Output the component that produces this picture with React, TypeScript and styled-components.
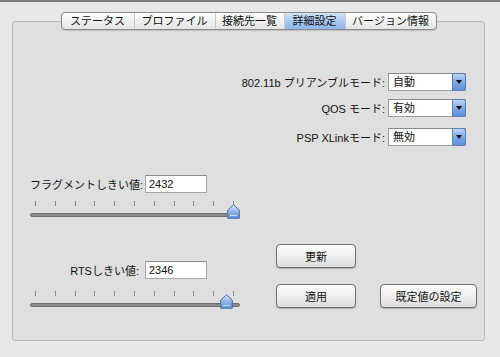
import React from 'react'
import styled, { createGlobalStyle } from 'styled-components'

const GlobalStyle = createGlobalStyle`
  html, body {
    margin: 0;
    padding: 0;
    background: #e8e8e8;
  }
  * {
    box-sizing: border-box;
  }
`

const Screen = styled.div`
  width: 500px;
  height: 357px;
  overflow: hidden;
  background: #e8e8e8;
  border-top: 2px solid #7b7b7b;
  padding: 10px 0 0 12px;
  font-family: 'Liberation Sans', 'Noto Sans CJK JP', sans-serif;
  font-size: 11px;
  color: #111;
`
const TabRow = styled.div`
  width: 473px;
  display: flex;
  justify-content: center;
  position: relative;
  z-index: 1;
`
const TabBar = styled.div`
  display: flex;
  height: 18px;
  border: 1px solid #8a8a8a;
  border-radius: 4px;
  overflow: hidden;
  background: linear-gradient(#ffffff, #f1f1f1 50%, #e4e4e4);
  box-shadow: 0 1px 1px rgba(0, 0, 0, 0.15);
`
const Tab = styled.div<{ $w: number; $active?: boolean }>`
  width: ${(p) => p.$w}px;
  display: flex;
  align-items: center;
  justify-content: center;
  line-height: 16px;
  border-left: 1px solid #c9c9c9;
  background: ${(p) =>
    p.$active
      ? 'linear-gradient(#d4e4f8, #a8c8f0 50%, #8db6ec)'
      : 'transparent'};
  &:first-child {
    border-left: none;
  }
`
const Panel = styled.div`
  width: 473px;
  height: 320px;
  margin-top: -9px;
  border: 1px solid #b8b8b8;
  border-radius: 3px;
  background: #dfdfdf;
  padding: 51px 18px 0 17px;
`
const SelectStack = styled.div`
  display: flex;
  flex-direction: column;
  align-items: flex-end;
`
const SelectRow = styled.div<{ $mt: number }>`
  display: flex;
  align-items: center;
  gap: 3px;
  margin-top: ${(p) => p.$mt}px;
`
const Label = styled.span`
  white-space: nowrap;
`
const SelectBox = styled.div`
  width: 78px;
  height: 18px;
  display: flex;
  background: #fff;
  border: 1px solid #9c9c9c;
  border-top-color: #8a8a8a;
`
const SelectValue = styled.span`
  flex: 1;
  padding-left: 4px;
  line-height: 16px;
`
const SelectArrow = styled.div`
  width: 14px;
  height: 18px;
  margin: -1px -1px 0 0;
  border: 1px solid #5a7fb5;
  border-radius: 0 3px 3px 0;
  background: linear-gradient(#bcd5f4, #7ea9e6 50%, #5d90dc);
  display: flex;
  align-items: center;
  justify-content: center;
  &::after {
    content: '';
    border-left: 3px solid transparent;
    border-right: 3px solid transparent;
    border-top: 4px solid #111;
  }
`
const Lower = styled.div`
  display: flex;
  margin-top: 29px;
`
const SliderColumn = styled.div`
  flex: none;
  width: 210px;
  display: flex;
  flex-direction: column;
`
const InputRow = styled.div<{ $mt: number }>`
  display: grid;
  grid-template-columns: 109px 62px;
  gap: 6px;
  align-items: center;
  height: 18px;
  margin-top: ${(p) => p.$mt}px;
`
const RightLabel = styled.span`
  text-align: right;
  white-space: nowrap;
`
const NumberField = styled.div`
  height: 18px;
  background: #fff;
  border: 1px solid #a8a8a8;
  border-top-color: #8e8e8e;
  padding-left: 3px;
  line-height: 16px;
`
const SliderBox = styled.div<{ $mt: number }>`
  position: relative;
  height: 20px;
  margin-top: ${(p) => p.$mt}px;
`
const Ticks = styled.div`
  display: flex;
  justify-content: space-between;
  padding: 2px 6px 0 5px;
`
const Tick = styled.span`
  width: 1px;
  height: 5px;
  background: #8a8a8a;
`
const Track = styled.div`
  margin-top: 7px;
  height: 4px;
  border-radius: 2px;
  background: #8c8c8c;
  border: 1px solid #6f6f6f;
`
const Thumb = styled.svg`
  position: absolute;
  top: 5px;
`
const ButtonArea = styled.div`
  flex: none;
  margin-left: 36px;
  padding-top: 69px;
  display: grid;
  grid-template-columns: 80px 97px;
  column-gap: 24px;
  row-gap: 16px;
  align-content: start;
`
const Button = styled.div`
  height: 24px;
  border: 1px solid #6e6e6e;
  border-radius: 4px;
  background: linear-gradient(#fdfdfd, #eeeeee 50%, #dcdcdc);
  box-shadow: 0 1px 1px rgba(0, 0, 0, 0.2);
  display: flex;
  align-items: center;
  justify-content: center;
`

const tabs = [
  { label: 'ステータス', w: 72 },
  { label: 'プロファイル', w: 81 },
  { label: '接続先一覧', w: 69 },
  { label: '詳細設定', w: 61, active: true },
  { label: 'バージョン情報', w: 91 }
]

const selects = [
  { label: '802.11b プリアンブルモード:', value: '自動', mt: 0 },
  { label: 'QOS モード:', value: '有効', mt: 8 },
  { label: 'PSP XLinkモード:', value: '無効', mt: 11 }
]

function Slider({ pos, mt }: { pos: number; mt: number }) {
  // thumb centre runs between the first and last tick (5px .. 203px)
  const left = 5 + pos * 198 - 6.5
  return (
    <SliderBox $mt={mt}>
      <Ticks>
        {Array.from({ length: 11 }).map((_, i) => (
          <Tick key={i} />
        ))}
      </Ticks>
      <Track />
      <Thumb width='13' height='15' viewBox='0 0 13 15' style={{ left }}>
        <defs>
          <linearGradient id='thumbFill' x1='0' y1='0' x2='0' y2='1'>
            <stop offset='0' stopColor='#dce9f9' />
            <stop offset='0.5' stopColor='#8fb6ea' />
            <stop offset='1' stopColor='#5f92dc' />
          </linearGradient>
        </defs>
        <path
          d='M6.5 0.8 L12.3 6 L12.3 14.3 L0.7 14.3 L0.7 6 Z'
          fill='url(#thumbFill)'
          stroke='#4d6fa5'
          strokeWidth='1'
        />
        <path d='M3 11.5 H10' stroke='#c9ddf6' strokeWidth='1' />
      </Thumb>
    </SliderBox>
  )
}

export default function App() {
  return (
    <Screen>
      <GlobalStyle />
      <TabRow>
        <TabBar>
          {tabs.map((t) => (
            <Tab key={t.label} $w={t.w} $active={t.active}>
              {t.label}
            </Tab>
          ))}
        </TabBar>
      </TabRow>
      <Panel>
        <SelectStack>
          {selects.map((s) => (
            <SelectRow key={s.label} $mt={s.mt}>
              <Label>{s.label}</Label>
              <SelectBox>
                <SelectValue>{s.value}</SelectValue>
                <SelectArrow />
              </SelectBox>
            </SelectRow>
          ))}
        </SelectStack>
        <Lower>
          <SliderColumn>
            <InputRow $mt={0}>
              <RightLabel>フラグメントしきい値:</RightLabel>
              <NumberField>2432</NumberField>
            </InputRow>
            <Slider pos={1} mt={6} />
            <InputRow $mt={42}>
              <RightLabel>RTSしきい値:</RightLabel>
              <NumberField>2346</NumberField>
            </InputRow>
            <Slider pos={0.965} mt={10} />
          </SliderColumn>
          <ButtonArea>
            <Button>更新</Button>
            <span />
            <Button>適用</Button>
            <Button>既定値の設定</Button>
          </ButtonArea>
        </Lower>
      </Panel>
    </Screen>
  )
}
